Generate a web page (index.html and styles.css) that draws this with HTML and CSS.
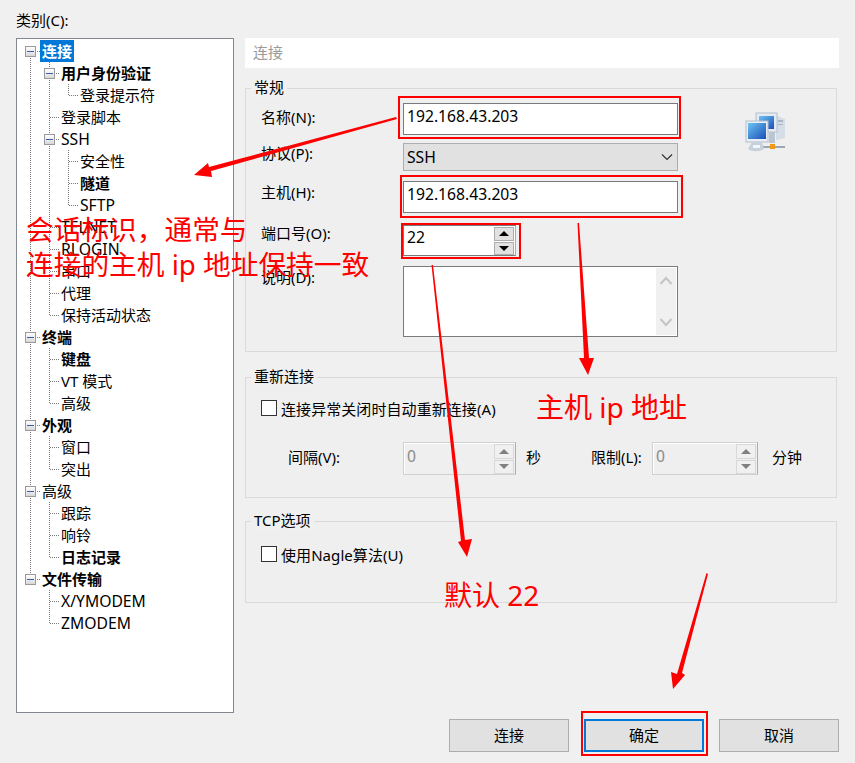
FILE: index.html
```html
<!DOCTYPE html>
<html lang="zh-CN">
<head>
    <meta charset="UTF-8">
    <meta name="viewport" content="width=device-width, initial-scale=1.0">
    <title>新建会话属性</title>
    <link rel="stylesheet" href="styles.css">
</head>
<body>
    <div class="dialog">
        <div class="side">
            <div class="side-label">类别(C):</div>
            <div class="tree">
                <svg class="tree-lines" width="216" height="673" viewBox="17 39 216 673">
                    <path d="M30.5 58V577 M49.5 62V315 M49.5 348V403 M49.5 436V469 M49.5 502V557 M49.5 590V623 M68.5 84V95 M68.5 150V205"/>
                    <path d="M37 51.5H40 M37 337.5H40 M37 425.5H40 M37 491.5H40 M37 579.5H40 M56 73.5H59 M56 139.5H59"/>
                    <path d="M50 117.5H59 M50 227.5H59 M50 249.5H59 M50 271.5H59 M50 293.5H59 M50 315.5H59 M50 359.5H59 M50 381.5H59 M50 403.5H59 M50 447.5H59 M50 469.5H59 M50 513.5H59 M50 535.5H59 M50 557.5H59 M50 601.5H59 M50 623.5H59"/>
                    <path d="M69 95.5H78 M69 161.5H78 M69 183.5H78 M69 205.5H78"/>
                </svg>
                <ul class="tree-list">
                    <li class="lvl-0"><span class="expander"></span><span class="node selected">连接</span></li>
                    <li class="lvl-1"><span class="expander"></span><span class="node bold">用户身份验证</span></li>
                    <li class="lvl-2"><span class="node">登录提示符</span></li>
                    <li class="lvl-1 leaf"><span class="node">登录脚本</span></li>
                    <li class="lvl-1"><span class="expander"></span><span class="node latin">SSH</span></li>
                    <li class="lvl-2"><span class="node">安全性</span></li>
                    <li class="lvl-2"><span class="node bold">隧道</span></li>
                    <li class="lvl-2"><span class="node latin">SFTP</span></li>
                    <li class="lvl-1 leaf"><span class="node latin">TELNET</span></li>
                    <li class="lvl-1 leaf"><span class="node latin">RLOGIN</span></li>
                    <li class="lvl-1 leaf"><span class="node">串口</span></li>
                    <li class="lvl-1 leaf"><span class="node">代理</span></li>
                    <li class="lvl-1 leaf"><span class="node">保持活动状态</span></li>
                    <li class="lvl-0"><span class="expander"></span><span class="node bold">终端</span></li>
                    <li class="lvl-1 leaf"><span class="node bold">键盘</span></li>
                    <li class="lvl-1 leaf"><span class="node">VT 模式</span></li>
                    <li class="lvl-1 leaf"><span class="node">高级</span></li>
                    <li class="lvl-0"><span class="expander"></span><span class="node bold">外观</span></li>
                    <li class="lvl-1 leaf"><span class="node">窗口</span></li>
                    <li class="lvl-1 leaf"><span class="node">突出</span></li>
                    <li class="lvl-0"><span class="expander"></span><span class="node">高级</span></li>
                    <li class="lvl-1 leaf"><span class="node">跟踪</span></li>
                    <li class="lvl-1 leaf"><span class="node">响铃</span></li>
                    <li class="lvl-1 leaf"><span class="node bold">日志记录</span></li>
                    <li class="lvl-0"><span class="expander"></span><span class="node bold">文件传输</span></li>
                    <li class="lvl-1 leaf"><span class="node latin">X/YMODEM</span></li>
                    <li class="lvl-1 leaf"><span class="node latin">ZMODEM</span></li>
                </ul>
            </div>
        </div>

        <div class="main">
            <div class="page-title">连接</div>

            <div class="group group-general">
                <div class="group-title">常规</div>
                <div class="form">
                    <div class="form-label">名称(N):</div>
                    <div class="field field-name latin">192.168.43.203</div>
                    <svg class="host-icon" width="40" height="40" viewBox="0 0 40 40">
                        <defs>
                            <linearGradient id="screen" x1="0" y1="0" x2="1" y2="1">
                                <stop offset="0" stop-color="#6cc4f2"/>
                                <stop offset="1" stop-color="#1a4fb8"/>
                            </linearGradient>
                        </defs>
                        <path d="M31 3L37 6L40 7V26L31 28Z" fill="#d5dde6"/>
                        <path d="M33 8H38V10H33ZM33 12H38V13H33Z" fill="#aab6c4"/>
                        <rect x="11" y="1" width="21" height="19" fill="#e4ebf2" stroke="#b4c0cc"/>
                        <rect x="14" y="4" width="15" height="13" fill="url(#screen)"/>
                        <path d="M24 20H30V31H24Z" fill="#b9c6d2"/>
                        <path d="M13 34H40V36H13Z" fill="#9aa8b6"/>
                        <rect x="1" y="9" width="22" height="21" fill="#e8eef4" stroke="#b4c0cc"/>
                        <rect x="3" y="11" width="18" height="16" fill="url(#screen)"/>
                        <path d="M7 30H17L19 37C15 40 7 40 3 37Z" fill="#c6d1dc"/>
                        <path d="M8 33H15V36H8Z" fill="#f4f7fa"/>
                        <rect x="25" y="32" width="5" height="5" fill="#f09a14"/>
                    </svg>

                    <div class="form-label label-low">协议(P):</div>
                    <div class="combo">
                        <span class="latin">SSH</span>
                        <svg width="12" height="8" viewBox="0 0 12 8"><polyline points="1,1.5 6,6.5 11,1.5" fill="none" stroke="#333" stroke-width="1.2"/></svg>
                    </div>

                    <div class="form-label label-low">主机(H):</div>
                    <div class="field field-host latin">192.168.43.203</div>

                    <div class="form-label">端口号(O):</div>
                    <div class="spin spin-port">
                        <div class="spin-value latin">22</div>
                        <div class="spin-btns">
                            <span class="spin-btn"><i class="tri-up"></i></span>
                            <span class="spin-btn"><i class="tri-down"></i></span>
                        </div>
                    </div>

                    <div class="form-label label-top">说明(D):</div>
                    <div class="memo">
                        <div class="memo-scroll">
                            <svg width="14" height="9" viewBox="0 0 14 9"><polyline points="1.5,8 7,2 12.5,8" fill="none" stroke="#c4c4c4" stroke-width="2"/></svg>
                            <svg width="14" height="9" viewBox="0 0 14 9"><polyline points="1.5,1 7,7 12.5,1" fill="none" stroke="#c4c4c4" stroke-width="2"/></svg>
                        </div>
                    </div>
                </div>
            </div>

            <div class="group group-reconnect">
                <div class="group-title">重新连接</div>
                <div class="check-row"><span class="checkbox"></span>连接异常关闭时自动重新连接(A)</div>
                <div class="retry-row">
                    <span class="retry-label">间隔(V):</span>
                    <div class="spin spin-off spin-interval">
                        <div class="spin-value latin">0</div>
                        <div class="spin-btns">
                            <span class="spin-btn"><i class="tri-up"></i></span>
                            <span class="spin-btn"><i class="tri-down"></i></span>
                        </div>
                    </div>
                    <span class="unit-sec">秒</span>
                    <span class="limit-label">限制(L):</span>
                    <div class="spin spin-off spin-limit">
                        <div class="spin-value latin">0</div>
                        <div class="spin-btns">
                            <span class="spin-btn"><i class="tri-up"></i></span>
                            <span class="spin-btn"><i class="tri-down"></i></span>
                        </div>
                    </div>
                    <span class="unit-min">分钟</span>
                </div>
            </div>

            <div class="group group-tcp">
                <div class="group-title">TCP选项</div>
                <div class="check-row"><span class="checkbox"></span>使用Nagle算法(U)</div>
            </div>

            <div class="buttons">
                <div class="btn">连接</div>
                <div class="btn btn-default">确定</div>
                <div class="btn">取消</div>
            </div>
        </div>
    </div>

    <!-- 标注层 -->
    <svg class="marks" width="855" height="763" viewBox="0 0 855 763">
        <g fill="none" stroke="#ff0000" stroke-width="2">
            <rect x="399" y="97" width="281" height="41"/>
            <rect x="401" y="176" width="281" height="41"/>
            <rect x="402" y="224" width="118" height="34"/>
            <rect x="582" y="712" width="125" height="43"/>
        </g>
        <g fill="#ff0000">
            <polygon points="396,117 397,119 211,171 212,177 194,175 208,163 209,167"/>
            <polygon points="577.5,223 579,223 589,358 594,358 588,375 579,358 584,358"/>
            <polygon points="431.5,265 433,265 465,540 472,539 467,557 458,542 461,541"/>
            <polygon points="706.5,573 708,574 682,673 685,675 673,689 671,672 677,674"/>
        </g>
    </svg>
    <div class="note note-a">会话标识，通常与</div>
    <div class="note note-b">连接的主机 ip 地址保持一致</div>
    <div class="note note-c">主机 ip 地址</div>
    <div class="note note-d">默认 22</div>
</body>
</html>
```

FILE: styles.css
```css
body {
    margin: 0;
    background-color: #f0f0f0;
    color: #000;
    font-family: "Noto Sans", "Noto Sans CJK SC", sans-serif;
    font-size: 15px;
    position: relative;
    width: 855px;
    height: 763px;
    overflow: hidden;
}
.latin { font-size: 15.7px; }
.dialog {
    display: flex;
    gap: 11px;
    padding: 0 16px;
    height: 763px;
    box-sizing: border-box;
}

/* 左侧树 */
.side {
    width: 218px;
    display: flex;
    flex-direction: column;
}
.side-label {
    height: 38px;
    line-height: 40px;
}
.tree {
    position: relative;
    height: 675px;
    box-sizing: border-box;
    background-color: #fff;
    border: 1px solid #828790;
}
.tree-lines {
    position: absolute;
    left: 0;
    top: 0;
}
.tree-lines path {
    fill: none;
    stroke: #7a7a7a;
    stroke-width: 1;
    stroke-dasharray: 1 1;
}
.tree-list {
    position: relative;
    list-style: none;
    margin: 0;
    padding: 1px 0 0;
}
.tree-list li {
    display: flex;
    align-items: center;
    height: 22px;
}
.lvl-0 { padding-left: 8px; }
.lvl-1 { padding-left: 27px; }
.lvl-1.leaf { padding-left: 42px; }
.lvl-2 { padding-left: 61px; }
.expander {
    position: relative;
    width: 11px;
    height: 11px;
    box-sizing: border-box;
    margin-right: 4px;
    border: 1px solid #9a9a9a;
    background: linear-gradient(#fff, #d8d8d8);
}
.expander::after {
    content: "";
    position: absolute;
    left: 1px;
    right: 1px;
    top: 4px;
    height: 1px;
    background-color: #3c5fa8;
}
.node {
    padding: 0 2px;
    line-height: 22px;
    white-space: nowrap;
}
.bold { font-weight: bold; }
.selected {
    background-color: #0078d7;
    color: #fff;
    font-weight: bold;
}

/* 右侧 */
.main {
    width: 594px;
    padding-top: 38px;
    display: flex;
    flex-direction: column;
}
.page-title {
    height: 30px;
    line-height: 29px;
    padding-left: 8px;
    background-color: #fff;
    color: #9a9a9a;
    margin-bottom: 20px;
}
.group {
    width: 592px;
    box-sizing: border-box;
    border: 1px solid #dadada;
    background-color: #efefef;
}
.group-title {
    width: fit-content;
    height: 20px;
    line-height: 19px;
    margin: -11px 0 0 5px;
    padding: 0 3px;
    background-color: #f0f0f0;
}
.group-general {
    height: 264px;
    margin-bottom: 25px;
}
.group-reconnect {
    height: 121px;
    margin-bottom: 23px;
}
.group-tcp { height: 82px; }

.form {
    display: grid;
    grid-template-columns: 142px 275px 1fr;
    padding: 5px 0 0 15px;
    align-items: center;
}
.form-label {
    grid-column: 1;
    line-height: 20px;
    padding-bottom: 4px;
}
.label-low { margin-top: 4px; }
.label-top {
    align-self: start;
    margin-top: 11px;
}
.field {
    height: 32px;
    box-sizing: border-box;
    border: 1px solid #7a7a7a;
    background-color: #fff;
    padding-left: 3px;
    line-height: 25px;
}
.field-host { margin-top: 10px; grid-column: 2; }
.host-icon {
    grid-row: 1 / span 2;
    grid-column: 3;
    margin: 9px 0 0 67px;
    align-self: start;
}
.combo {
    height: 28px;
    margin-top: 8px;
    grid-column: 2;
    box-sizing: border-box;
    border: 1px solid #adadad;
    background-color: #e1e1e1;
    padding: 0 3px;
    display: flex;
    align-items: center;
    justify-content: space-between;
}
.combo svg { margin-right: 1px; }

.spin {
    display: flex;
    box-sizing: border-box;
    background-color: #fff;
    border: 1px solid #7a7a7a;
    border-right-color: #adadad;
}
.spin-value {
    flex: 1;
    padding-left: 3px;
    line-height: 23px;
}
.spin-btns {
    width: 20px;
    display: flex;
    flex-direction: column;
    gap: 1px;
    padding-top: 1px;
    margin-right: 1px;
}
.spin-btn {
    flex: 1;
    display: flex;
    align-items: center;
    justify-content: center;
    box-sizing: border-box;
    background-color: #e1e1e1;
    border: 1px solid #adadad;
}
.tri-up, .tri-down {
    width: 0;
    height: 0;
    border-left: 5px solid transparent;
    border-right: 5px solid transparent;
}
.tri-up { border-bottom: 5px solid #000; }
.tri-down { border-top: 5px solid #000; }
.spin-port {
    width: 113px;
    height: 31px;
    margin-top: 12px;
    grid-column: 2;
    border-bottom-color: #7a7a7a;
}
.spin-off {
    height: 33px;
    background-color: #efefef;
    border: 1px solid #d0d0d0;
    border-right-color: #adadad;
    box-shadow: inset 1px 1px 0 #fff;
    color: #8a8a8a;
}
.spin-off .spin-value { line-height: 26px; }
.spin-off .spin-btn {
    background-color: #f0f0f0;
    border-color: #d8d8d8;
}
.spin-off .tri-up { border-bottom-color: #808080; }
.spin-off .tri-down { border-top-color: #808080; }
.memo {
    height: 71px;
    margin-top: 10px;
    grid-column: 2;
    box-sizing: border-box;
    border: 1px solid #7a7a7a;
    background-color: #fff;
    display: flex;
    justify-content: flex-end;
    padding: 1px;
}
.memo-scroll {
    width: 20px;
    background-color: #f0f0f0;
    display: flex;
    flex-direction: column;
    align-items: center;
    justify-content: space-between;
    padding: 8px 0;
    box-sizing: border-box;
}

.check-row {
    display: flex;
    align-items: center;
    height: 20px;
    padding-left: 15px;
    margin-top: 11px;
    letter-spacing: 0.07px;
}
.checkbox {
    width: 16px;
    height: 16px;
    box-sizing: border-box;
    border: 1px solid #333;
    background-color: #fff;
    margin-right: 4px;
}
.group-tcp .check-row { margin-top: 13px; }
.retry-row {
    display: flex;
    align-items: center;
    margin-top: 24px;
    padding-left: 42px;
}
.retry-row > span { padding-bottom: 4px; }
.retry-label { width: 115px; }
.spin-interval { width: 113px; }
.unit-sec { width: 15px; margin-left: 10px; }
.limit-label { width: 61px; margin-left: 50px; }
.spin-limit { width: 106px; }
.unit-min { margin-left: 14px; }

.buttons {
    display: flex;
    justify-content: flex-end;
    gap: 15px;
    margin-top: auto;
    margin-bottom: 11px;
}
.btn {
    width: 120px;
    height: 33px;
    box-sizing: border-box;
    border: 1px solid #adadad;
    background-color: #e1e1e1;
    text-align: center;
    line-height: 31px;
}
.btn-default {
    border: 2px solid #0078d7;
    line-height: 29px;
}

/* 标注 */
.marks {
    position: absolute;
    left: 0;
    top: 0;
}
.note {
    position: absolute;
    color: #ff0000;
    font-size: 27.7px;
    line-height: 36px;
    white-space: nowrap;
}
.note-a { left: 26px; top: 211px; }
.note-b { left: 26px; top: 246px; }
.note-c { left: 536px; top: 389px; font-size: 28px; }
.note-d { left: 444px; top: 577px; font-size: 28px; }
```
